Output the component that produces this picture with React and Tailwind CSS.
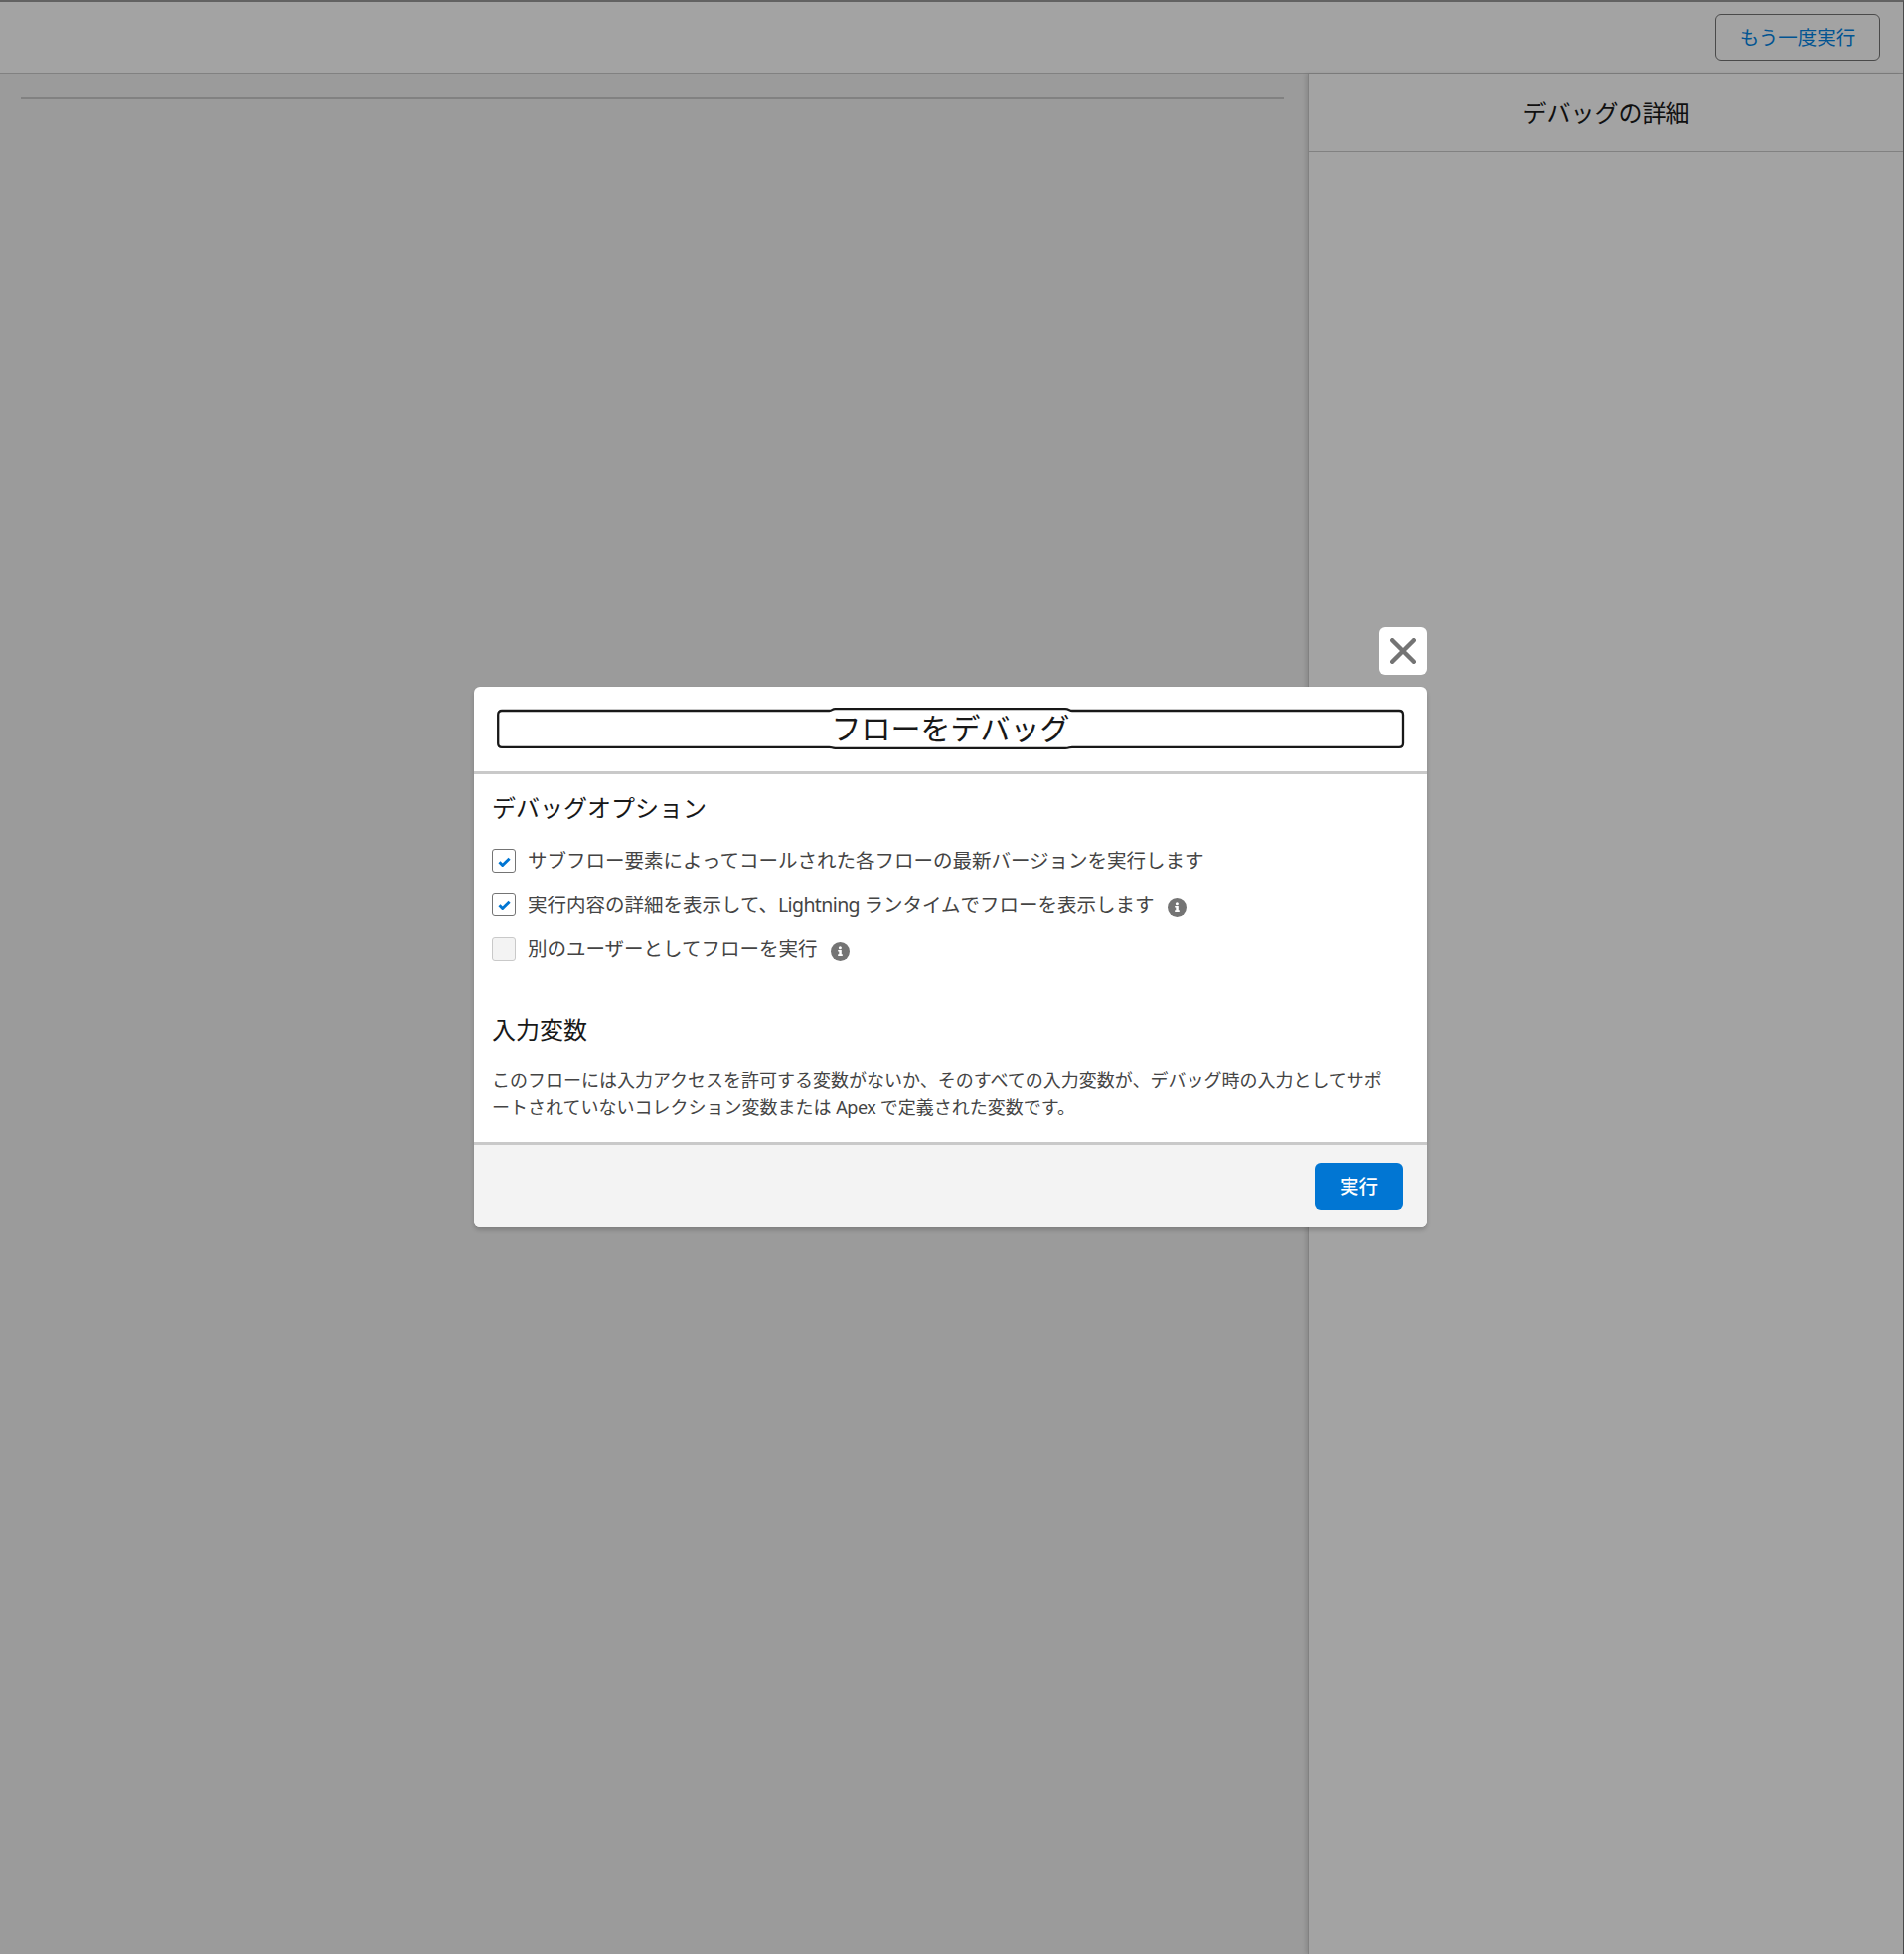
import React, { useState } from 'react';

const InfoIcon = () => (
  <svg className="size-[19px] shrink-0" viewBox="0 0 19 19">
    <circle cx="9.5" cy="9.5" r="9.5" fill="#747474" />
    <circle cx="9.4" cy="5.7" r="1.5" fill="#fff" />
    <path d="M7.2 8h3.6v4.3h1v1.7H7.2v-1.7h1.1V9.5H7.2z" fill="#fff" />
  </svg>
);

const CheckIcon = () => (
  <svg className="h-[11px] w-[13px]" viewBox="0 0 13 11">
    <path d="M1.5 5.3l3.2 3.2L11.6 1.7" fill="none" stroke="#0176d3" strokeWidth="3" strokeLinejoin="round" />
  </svg>
);

const options = [
  { id: 'latest', label: 'サブフロー要素によってコールされた各フローの最新バージョンを実行します', checked: true },
  {
    id: 'details',
    label: (
      <>
        実行内容の詳細を表示して、<span className="tracking-[-0.6px]">Lightning </span>ランタイムでフローを表示します
      </>
    ),
    checked: true,
    info: true,
  },
  { id: 'runas', label: '別のユーザーとしてフローを実行', checked: false, disabled: true, info: true },
];

const DebugOption = ({ option, checked, onToggle }) => (
  <div className="flex h-[24px] items-center">
    <button
      type="button"
      role="checkbox"
      aria-checked={checked}
      aria-labelledby={`${option.id}-label`}
      disabled={option.disabled}
      onClick={() => onToggle(option.id)}
      className={`flex size-6 shrink-0 items-center justify-center rounded-[3px] border pt-[2px] ${
        option.disabled ? 'border-[#c9c9c9] bg-[#f3f3f3]' : 'border-[#747474] bg-white'
      }`}
    >
      {checked && <CheckIcon />}
    </button>
    <span id={`${option.id}-label`} className="mt-[0.4px] ml-3 text-[19.5px] leading-6 whitespace-nowrap text-[#444444]">
      {option.label}
    </span>
    {option.info && (
      <span className="mt-[5.4px] ml-[13px]">
        <InfoIcon />
      </span>
    )}
  </div>
);

const DebugModal = () => {
  const [checked, setChecked] = useState(Object.fromEntries(options.map((o) => [o.id, o.checked])));

  const toggle = (id) => setChecked({ ...checked, [id]: !checked[id] });

  return (
    <div className="flex w-[959px] flex-col items-end">
      <button type="button" aria-label="閉じる" className="mb-3 flex size-12 items-center justify-center rounded-[6px] bg-white">
        <svg className="size-[26px]" viewBox="0 0 26 26">
          <path d="M2.2 2.2l21.6 21.6M23.8 2.2L2.2 23.8" fill="none" stroke="#747474" strokeWidth="4.4" strokeLinecap="round" />
        </svg>
      </button>

      <section className="w-full overflow-hidden rounded-[6px] bg-white shadow-[0_3px_4px_rgba(0,0,0,0.18)]">
        <header className="h-[88px] border-b-3 border-[#c9c9c9] px-6 pt-[21px]">
          <div className="relative h-[42px]">
            <h1 className="text-center text-[30px] leading-[42px] text-[#181818]">フローをデバッグ</h1>
            {/* focus ring, slightly taller around the title text */}
            <svg className="pointer-events-none absolute top-0 -left-px h-[42px] w-[914px]" viewBox="0 0 914 42" fill="none">
              <path
                d="M5 3H334.5C337.5 3 337 1.2 340.500 1.2H572C576 1.2 576 3 579 3H908Q912 3 912 7V36Q912 39.8 908 39.8H579C576 39.8 576 40.8 572 40.8H340.500C337 40.8 337.5 39.8 334.5 39.8H5Q1.2 39.8 1.2 36V7Q1.2 3 5 3Z"
                stroke="#181818"
                strokeWidth="2.3"
              />
            </svg>
          </div>
        </header>

        <div className="h-[370px] px-[18px] pt-[18px]">
          <h2 className="text-[24px] leading-8 text-[#181818]">デバッグオプション</h2>
          <div className="mt-[25px] flex flex-col gap-[20.4px]">
            {options.map((option) => (
              <DebugOption key={option.id} option={option} checked={checked[option.id]} onToggle={toggle} />
            ))}
          </div>
          <h2 className="mt-[53px] text-[24px] leading-8 text-[#181818]">入力変数</h2>
          <p className="mt-[22px] text-[18px] leading-[27px] whitespace-nowrap text-[#444444]">
            このフローには入力アクセスを許可する変数がないか、そのすべての入力変数が、デバッグ時の入力としてサポ
            <br />
            ートされていないコレクション変数または <span className="tracking-[-0.4px]">Apex </span>で定義された変数です。
          </p>
        </div>

        <footer className="flex h-[86px] items-center justify-end border-t-3 border-[#c9c9c9] bg-[#f3f3f3] pr-6">
          <button type="button" className="h-[47px] w-[89px] rounded-[6px] bg-[#0176d3] text-[19.5px] font-medium text-white">
            実行
          </button>
        </footer>
      </section>
    </div>
  );
};

const App = () => {
  return (
    <div className="relative flex h-[1966px] w-[1916px] flex-col overflow-hidden border-t-2 border-r border-t-[#626262] border-r-[#4a4a4a] bg-[#9b9b9b] font-['Noto_Sans','Noto_Sans_CJK_JP',sans-serif]">
      <header className="flex h-[72px] shrink-0 items-start justify-end border-b border-[#818181] bg-[#a3a3a3] pt-3 pr-[23px]">
        <button type="button" className="h-[47px] w-[166px] rounded-[6px] border border-[#4a4a4a] text-[19.5px] text-[#015492]">
          もう一度実行
        </button>
      </header>

      <div className="flex flex-1">
        <main className="flex-1 pt-6 pr-6 pl-[21px]">
          <div className="h-[2px] bg-[#818181]" />
        </main>
        <aside className="w-[599px] border-l border-[#818181] bg-[#a3a3a3] shadow-[-2px_0_4px_rgba(0,0,0,0.12)]">
          <div className="flex h-[79px] items-center justify-center border-b border-[#818181] pt-[2px] pl-px">
            <h2 className="text-[24px] leading-8 text-[#101010]">デバッグの詳細</h2>
          </div>
        </aside>
      </div>

      {/* modal layer */}
      <div className="absolute inset-0 flex justify-center pt-[629px] pr-[2px]">
        <DebugModal />
      </div>
    </div>
  );
};

export default App;
